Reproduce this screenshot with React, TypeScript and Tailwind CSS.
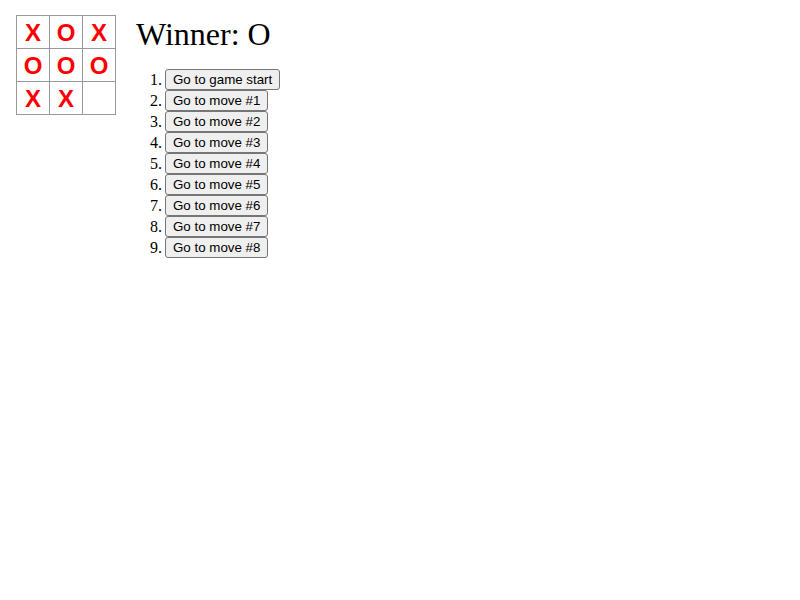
import React from 'react';

const squares = ['X', 'O', 'X', 'O', 'O', 'O', 'X', 'X', null];
const moves = ['Go to game start', 'Go to move #1', 'Go to move #2', 'Go to move #3', 'Go to move #4', 'Go to move #5', 'Go to move #6', 'Go to move #7', 'Go to move #8'];

const Square = ({ value }: { value: string | null }) => (
  <button className="w-[34px] h-[34px] -mr-px -mt-px p-0 bg-white border border-[#999] text-[24px] font-bold leading-[34px] text-center text-[#ff0000] font-['Liberation_Sans',Arial,sans-serif]">
    {value}
  </button>
);

const App = () => {
  return (
    <div className="min-h-screen bg-white pt-4 pl-4 font-['Liberation_Serif','Times_New_Roman',serif] text-black">
      <div className="flex flex-row items-start">
        <div>
          {[0, 1, 2].map((r) => (
            <div key={r} className="flex">
              {[0, 1, 2].map((c) => (
                <Square key={c} value={squares[r * 3 + c]} />
              ))}
            </div>
          ))}
        </div>
        <div className="ml-[21px]">
          <div className="text-[32px] leading-[37px]">Winner: O</div>
          <ol className="list-decimal pl-[30px] mt-4 text-base">
            {moves.map((m, i) => (
              <li key={i} className="leading-[21px]">
                <button className="h-[21px] px-[7px] py-px -ml-px bg-[#efefef] border border-[#767676] rounded-[3px] text-[13.33px] leading-[17px] font-['Liberation_Sans',Arial,sans-serif] text-black align-bottom">
                  {m}
                </button>
              </li>
            ))}
          </ol>
        </div>
      </div>
    </div>
  );
};

export default App;
